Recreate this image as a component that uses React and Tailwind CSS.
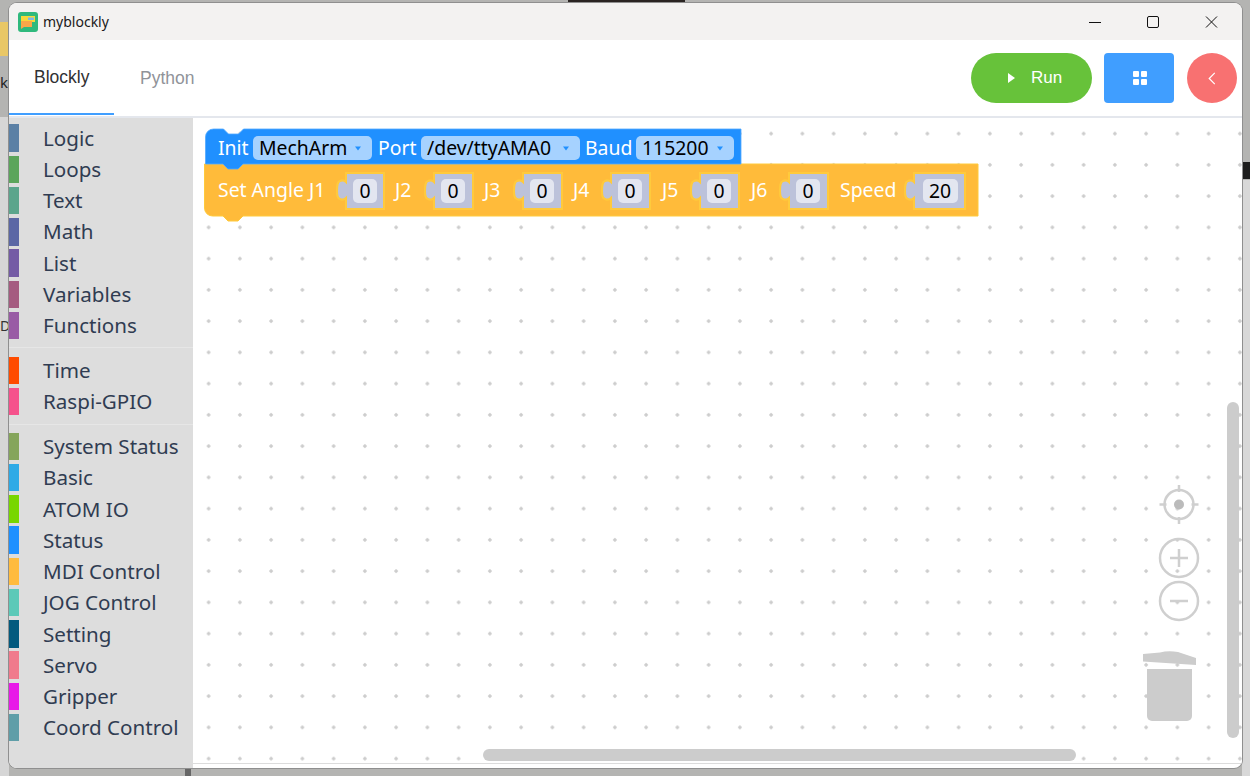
const groups = [
  [
    { name: "Logic", color: "#5b80a5" },
    { name: "Loops", color: "#5ba55b" },
    { name: "Text", color: "#5ba58c" },
    { name: "Math", color: "#5b67a5" },
    { name: "List", color: "#745ba5" },
    { name: "Variables", color: "#a55b80" },
    { name: "Functions", color: "#995ba5" },
  ],
  [
    { name: "Time", color: "#ff4c00" },
    { name: "Raspi-GPIO", color: "#f5528c" },
  ],
  [
    { name: "System Status", color: "#85a55b" },
    { name: "Basic", color: "#2eaae6" },
    { name: "ATOM IO", color: "#78d600" },
    { name: "Status", color: "#1e90ff" },
    { name: "MDI Control", color: "#ffbb3d" },
    { name: "JOG Control", color: "#5cc9b8" },
    { name: "Setting", color: "#035a7e" },
    { name: "Servo", color: "#f07a8c" },
    { name: "Gripper", color: "#e81ae8" },
    { name: "Coord Control", color: "#5f9ea8" },
  ],
];

const inputs = [
  { label: "J2", labelX: 395, x: 337, r: 384, value: "0" },
  { label: "J3", labelX: 484, x: 425, r: 473, value: "0" },
  { label: "J4", labelX: 573, x: 514, r: 562, value: "0" },
  { label: "J5", labelX: 662, x: 602, r: 650, value: "0" },
  { label: "J6", labelX: 751, x: 691, r: 739, value: "0" },
  { label: "Speed", labelX: 840, x: 780, r: 828, value: "0" },
  { label: null, x: 905, r: 965, value: "20", wide: true },
];

const dropdowns = [
  { label: "Init", labelX: 218, x: 253, w: 119, value: "MechArm" },
  { label: "Port", labelX: 378, x: 421, w: 159, value: "/dev/ttyAMA0" },
  { label: "Baud", labelX: 585, x: 636, w: 98, value: "115200" },
];

function Blocks() {
  return (
    <svg
      viewBox="201 126 790 100"
      className="absolute left-[8px] top-[8px] h-[100px] w-[790px] font-['Noto_Sans',sans-serif] text-[19.4px]"
    >
      {/* Set Angle block */}
      <path
        d="M204.5 164 H978 V216 H243 l-5 5 h-10 l-5 -5 H212.5 a8 8 0 0 1 -8 -8 z"
        fill="#ffbb3a"
        stroke="#ffca3c"
      />
      <text x="218" y="197" fill="#fff">Set Angle J1</text>
      {inputs.map((n) => (
        <g key={n.x}>
          {n.label && <text x={n.labelX} y="197" fill="#fff">{n.label}</text>}
          <path
            d={`M${n.x + 9} 173 H${n.r} V209 H${n.x + 9} V198 c-2 2 -4 2 -6 1 c-3 -1 -3 -4 -3 -8 c0 -5 0 -9 3 -10 c2 -1 4 -1 6 1 Z`}
            fill="#bcc2da"
            stroke="#ffca3c"
            strokeWidth="2"
          />
          <rect
            x={n.wide ? n.x + 18 : n.x + 16}
            y="179"
            width={n.wide ? 35 : 24}
            height="24"
            rx="5"
            fill="#e3e6f0"
          />
          <text
            x={n.wide ? n.x + 35 : n.x + 28}
            y="197.5"
            fill="#000"
            textAnchor="middle"
          >
            {n.value}
          </text>
        </g>
      ))}

      {/* Init block, its tab sits over the block below */}
      <path
        d="M205.5 137 a8 8 0 0 1 8 -8 h10 l5 5 h10 l5 -5 H741 V164 H243 l-5 5 h-10 l-5 -5 H205.5 z"
        fill="#2090ff"
        stroke="#52a8ff"
        strokeWidth="0.8"
      />
      {dropdowns.map((d) => (
        <g key={d.value}>
          <text x={d.labelX} y="155" fill="#fff">{d.label}</text>
          <rect x={d.x} y="136" width={d.w} height="24" rx="5" fill="#a6d2ff" />
          <text x={d.x + 6} y="155" fill="#000">{d.value}</text>
          <path d={`M${d.x + d.w - 17} 146.5 h6 l-3 4 z`} fill="#2090ff" />
        </g>
      ))}
    </svg>
  );
}

function WorkspaceControls() {
  return (
    <svg
      viewBox="1140 485 60 240"
      className="absolute left-[947px] top-[367px] h-[240px] w-[60px]"
      fill="none"
      stroke="#cfcfcf"
      strokeWidth="2.5"
    >
      {/* center */}
      <circle cx="1179" cy="504.5" r="14.5" />
      <path d="M1179 485 v7 M1179 517 v7 M1159.5 504.5 h7 M1191.5 504.5 h7" />
      <circle cx="1179" cy="504.5" r="5" fill="#bbb" stroke="none" />
      {/* zoom in */}
      <circle cx="1179" cy="558" r="19" />
      <path d="M1170 558 h18 M1179 549 v18" />
      {/* zoom out */}
      <circle cx="1179" cy="601" r="19" />
      <path d="M1170 601 h18" />
      {/* trash */}
      <path
        d="M1143 654 L1160 652.5 Q1168 650.5 1178 652 L1196 658 V665 L1143 661.5 Z"
        fill="#ccc"
        stroke="none"
      />
      <path
        d="M1147 669 h45 v47 a5 5 0 0 1 -5 5 h-35 a5 5 0 0 1 -5 -5 z"
        fill="#ccc"
        stroke="none"
      />
    </svg>
  );
}

function Sidebar() {
  return (
    <div className="w-[184px] shrink-0 bg-[#dddddd] pt-[4.4px] font-['Noto_Sans',sans-serif] text-[20.6px] text-[#303c52]">
      {groups.map((group, i) => (
        <div key={i}>
          {i > 0 && <div className="my-[6.3px] h-px bg-[#e6e6e6]" />}
          {group.map((item) => (
            <div key={item.name} className="flex h-[31.25px] items-center">
              <span className="h-[27.5px] w-[10px]" style={{ backgroundColor: item.color }} />
              <span className="ml-[24px] whitespace-nowrap">{item.name}</span>
            </div>
          ))}
        </div>
      ))}
    </div>
  );
}

function AppIcon() {
  return (
    <svg viewBox="0 0 20 20" className="h-[20px] w-[20px]">
      <rect width="20" height="20" rx="3" fill="#2fb97c" />
      <path d="M3 4 h14 v6 h-14 z" fill="#f7d83a" />
      <path d="M3 9 h11 v6 h-8 l-3 2 z" fill="#f9a648" />
      <rect x="10" y="5.5" width="6" height="2.5" fill="#7db7e8" />
    </svg>
  );
}

export default function App() {
  return (
    <div className="relative h-[776px] w-[1250px] overflow-hidden bg-[#b4b4b2] pl-[9px] pt-[3px]">
      {/* desktop behind the window */}
      <div className="absolute left-0 top-[117px] h-[659px] w-[9px] bg-[#d6d6d6]" />
      <div className="absolute left-0 top-[22px] h-[34px] w-[9px] bg-[#e9c766]" />
      <div className="absolute left-[568px] top-0 h-[3px] w-[117px] bg-[#2a2422]" />
      <div className="absolute right-0 top-[180px] h-[596px] w-[8px] bg-[#d8d8d8]" />
      <div className="absolute right-0 top-[162px] h-[17px] w-[7px] bg-[#1d1d1d]" />
      <div className="absolute left-[185px] top-[768px] h-[8px] w-[6px] bg-[#666666]" />
      <span className="absolute left-0 top-[75px] font-['Noto_Sans',sans-serif] text-[15px] leading-none text-[#222222]">k</span>
      <span className="absolute left-0 top-[319px] font-['Noto_Sans',sans-serif] text-[14px] leading-none text-[#333333]">D</span>

      <div className="relative flex h-[765px] w-[1233px] flex-col overflow-hidden rounded-lg bg-white shadow-[0_0_0_1px_#8f8f8f]">
        {/* title bar */}
        <div className="flex h-[37px] shrink-0 items-center bg-[#f3f2f1] pl-[9px]">
          <AppIcon />
          <span className="ml-[5px] font-['Noto_Sans',sans-serif] text-[14px] text-[#1a1a1a]">myblockly</span>
          <svg viewBox="0 0 140 14" className="ml-auto mr-[24px] h-[14px] w-[140px]" fill="none" stroke="#111" strokeWidth="1">
            <path d="M11 7.5 h12" />
            <rect x="69.5" y="1.5" width="11" height="11" rx="1.5" />
            <path d="M128 1.5 l11 11 M139 1.5 l-11 11" />
          </svg>
        </div>

        {/* tabs and actions */}
        <div className="flex h-[78px] shrink-0 border-b-2 border-[#e4e7ed] font-['Liberation_Sans',sans-serif] text-[17.5px]">
          <div className="flex h-[75px] w-[105px] items-center border-b-2 border-[#409eff] pl-[25px] pt-[1px] text-[#303133]">Blockly</div>
          <div className="flex h-[75px] items-center pl-[26px] pt-[1px] text-[#909399]">Python</div>
          <div className="ml-auto mr-[5px] mt-[13px] flex h-[50px] gap-[12px]">
            <button className="flex w-[121px] items-center justify-center rounded-full bg-[#67c23a] pl-[7px] text-[17px] text-white">
              <span className="h-0 w-0 border-y-[5px] border-l-[7px] border-y-transparent border-l-white" />
              <span className="ml-[16px]">Run</span>
            </button>
            <button className="flex w-[70px] items-center justify-center rounded bg-[#409eff]">
              <span className="ml-[1px] grid grid-cols-2 gap-[2px]">
                <span className="h-[6px] w-[6px] rounded-[1px] bg-white" />
                <span className="h-[6px] w-[6px] rounded-[1px] bg-white" />
                <span className="h-[6px] w-[6px] rounded-[1px] bg-white" />
                <span className="h-[6px] w-[6px] rounded-[1px] bg-white" />
              </span>
            </button>
            <button className="ml-[1px] flex w-[50px] items-center justify-center rounded-full bg-[#f87171]">
              <svg viewBox="0 0 8 14" className="h-[13px] w-[8px]" fill="none" stroke="#fff" strokeWidth="1.3">
                <path d="M7 1 L1 7 L7 13" />
              </svg>
            </button>
          </div>
        </div>

        {/* body */}
        <div className="flex min-h-0 flex-1">
          <Sidebar />
          <div className="relative mb-[4px] flex-1 border-b border-[#dcdcdc] bg-white bg-[radial-gradient(circle,#cccccc_1.4px,transparent_2px)] bg-[length:31.25px_31.25px]">
            <Blocks />
            <WorkspaceControls />
            <div className="absolute left-[1034px] top-[284px] h-[336px] w-[12px] rounded-full bg-[#cccccc]" />
            <div className="absolute left-[290px] top-[631px] h-[12px] w-[593px] rounded-full bg-[#cccccc]" />
          </div>
        </div>
      </div>
    </div>
  );
}
